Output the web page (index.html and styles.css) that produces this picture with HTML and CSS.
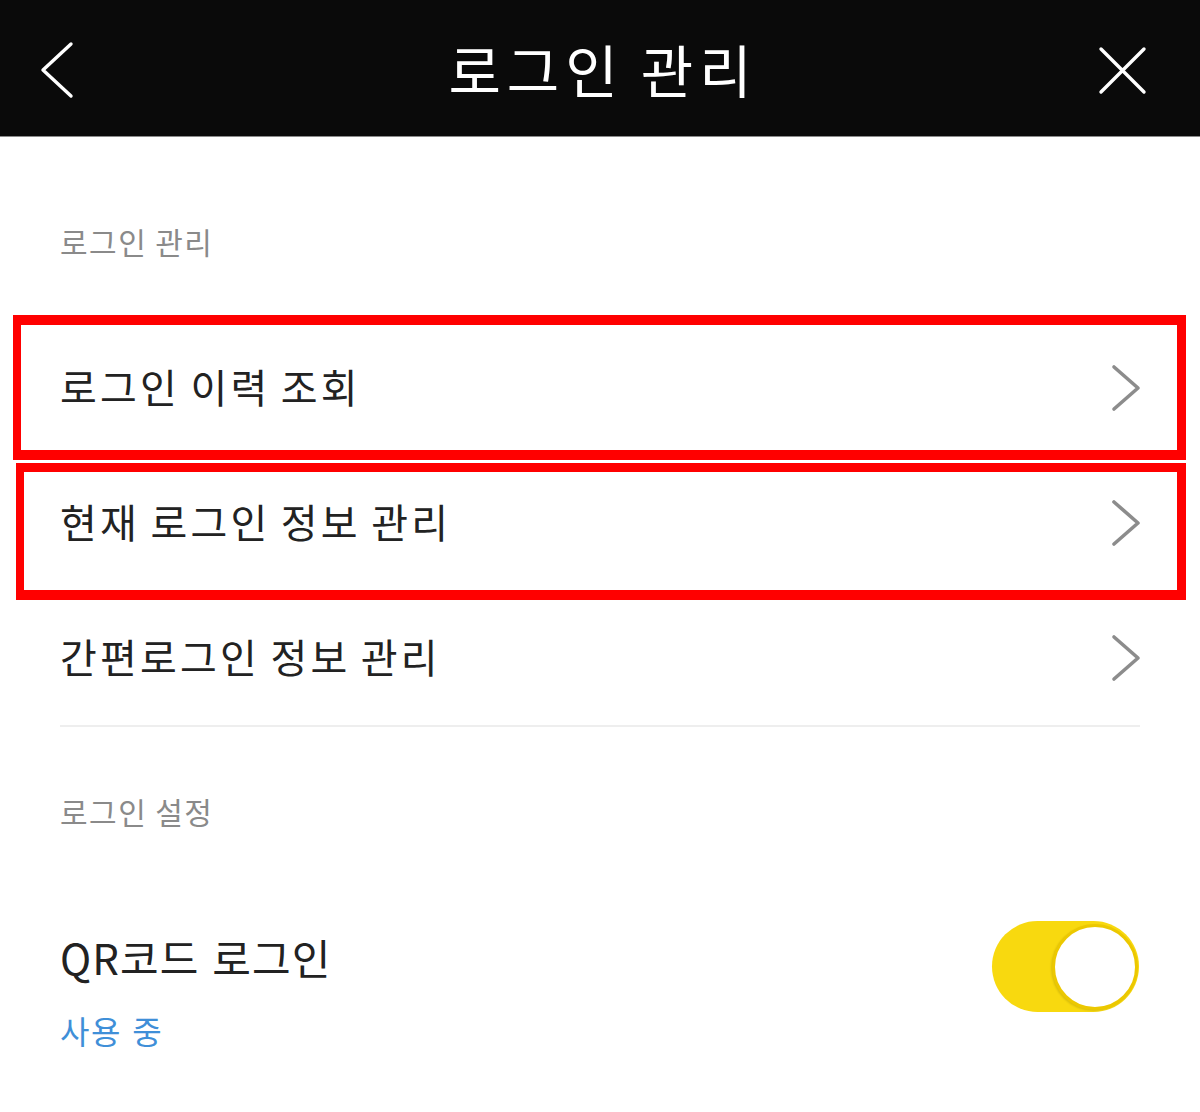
FILE: index.html
```html
<!DOCTYPE html>
<html lang="ko">
<head>
<meta charset="utf-8">
<link rel="stylesheet" href="styles.css">
</head>
<body>
<header class="topbar">
  <div class="tb-left">
    <svg class="ic-back" width="36" height="58" viewBox="0 0 36 58"><polyline points="32,3 4,29 32,55" fill="none" stroke="#fff" stroke-width="3.4" stroke-linecap="round" stroke-linejoin="round"/></svg>
  </div>
  <h1 class="title">로그인 관리</h1>
  <div class="tb-right">
    <svg class="ic-close" width="49" height="49" viewBox="0 0 49 49"><path d="M3 3L46 46M46 3L3 46" fill="none" stroke="#fff" stroke-width="3.4" stroke-linecap="round"/></svg>
  </div>
</header>

<main class="content">
  <div class="section-label first">로그인 관리</div>
  <div class="list">
    <div class="row"><span class="row-text">로그인 이력 조회</span><svg class="chev" width="30" height="48" viewBox="0 0 30 48"><polyline points="3,3 27,24 3,45" fill="none" stroke="#8c8c8c" stroke-width="3.6" stroke-linecap="round" stroke-linejoin="round"/></svg></div>
    <div class="row"><span class="row-text">현재 로그인 정보 관리</span><svg class="chev" width="30" height="48" viewBox="0 0 30 48"><polyline points="3,3 27,24 3,45" fill="none" stroke="#8c8c8c" stroke-width="3.6" stroke-linecap="round" stroke-linejoin="round"/></svg></div>
    <div class="row last"><span class="row-text">간편로그인 정보 관리</span><svg class="chev" width="30" height="48" viewBox="0 0 30 48"><polyline points="3,3 27,24 3,45" fill="none" stroke="#8c8c8c" stroke-width="3.6" stroke-linecap="round" stroke-linejoin="round"/></svg></div>
    <div class="mark mark-1"></div>
    <div class="mark mark-2"></div>
  </div>

  <div class="section-label second">로그인 설정</div>
  <div class="setting">
    <div class="setting-text">
      <div class="setting-title">QR코드 로그인</div>
      <div class="setting-status">사용 중</div>
    </div>
    <div class="toggle"><div class="knob"></div></div>
  </div>
</main>
</body>
</html>
```

FILE: styles.css
```css
* { box-sizing: border-box; }
html, body { margin: 0; padding: 0; }
body {
  background: #fff;
  font-family: "Noto Sans CJK KR", "Noto Sans", sans-serif;
  color: #222;
  width: 1200px;
}

.topbar {
  height: 137px;
  background: #0a0a0a;
  border-bottom: 1px solid #8a8a8a;
  display: grid;
  grid-template-columns: 1fr auto 1fr;
  align-items: center;
}
.tb-left { padding-left: 39px; display: flex; align-items: center; padding-top: 4px; }
.tb-right { padding-right: 53px; display: flex; justify-content: flex-end; align-items: center; padding-top: 4px; }
.title {
  margin: 0;
  color: #fff;
  font-size: 57px;
  font-weight: 400;
  line-height: 1;
  letter-spacing: 6px;
  word-spacing: -5px;
  margin-right: -6px;
}

.content { padding: 0 60px; }

.section-label {
  font-size: 30px;
  line-height: 40px;
  color: #8a8a8a;
  letter-spacing: 1.5px;
  word-spacing: -2px;
}
.section-label.first { padding-top: 84px; }
.section-label.second { padding-top: 64px; }

.list {
  position: relative;
  margin-top: 59px;
  border-bottom: 2px solid #eeeeee;
}
.row {
  height: 135px;
  display: flex;
  align-items: center;
  justify-content: space-between;
}
.row-text {
  font-size: 40px;
  line-height: 1;
  color: #222;
  padding-bottom: 3px;
  letter-spacing: 3.2px;
  word-spacing: -4px;
}
.chev { display: block; margin-right: -1px; }

.mark {
  position: absolute;
  border: 9px solid #ff0000;
  pointer-events: none;
}
.mark-1 { top: -5px; left: -47px; width: 1173px; height: 145px; border-width: 10px 9px 10px 8px; }
.mark-2 { top: 143px; left: -44px; width: 1170px; height: 137px; border-width: 9px 9px 10px 8px; }

.setting {
  margin-top: 90px;
  display: flex;
  justify-content: space-between;
  align-items: flex-start;
}
.setting-text { padding-top: 8px; }
.setting-title {
  font-size: 42px;
  line-height: 56px;
  color: #222;
  letter-spacing: 1.1px;
}
.setting-status {
  margin-top: 23px;
  font-size: 32px;
  line-height: 44px;
  color: #3f8fd8;
  letter-spacing: 1.5px;
}

.toggle {
  width: 147px;
  height: 91px;
  border-radius: 46px;
  background: #f8d90f;
  display: flex;
  justify-content: flex-end;
  align-items: center;
  padding-right: 1px;
  margin-right: 1px;
}
.knob {
  width: 86px;
  height: 86px;
  border-radius: 50%;
  background: #fff;
  border: 3px solid #ecc800;
  box-shadow: -1px 1px 2px rgba(0,0,0,0.12);
}
```
